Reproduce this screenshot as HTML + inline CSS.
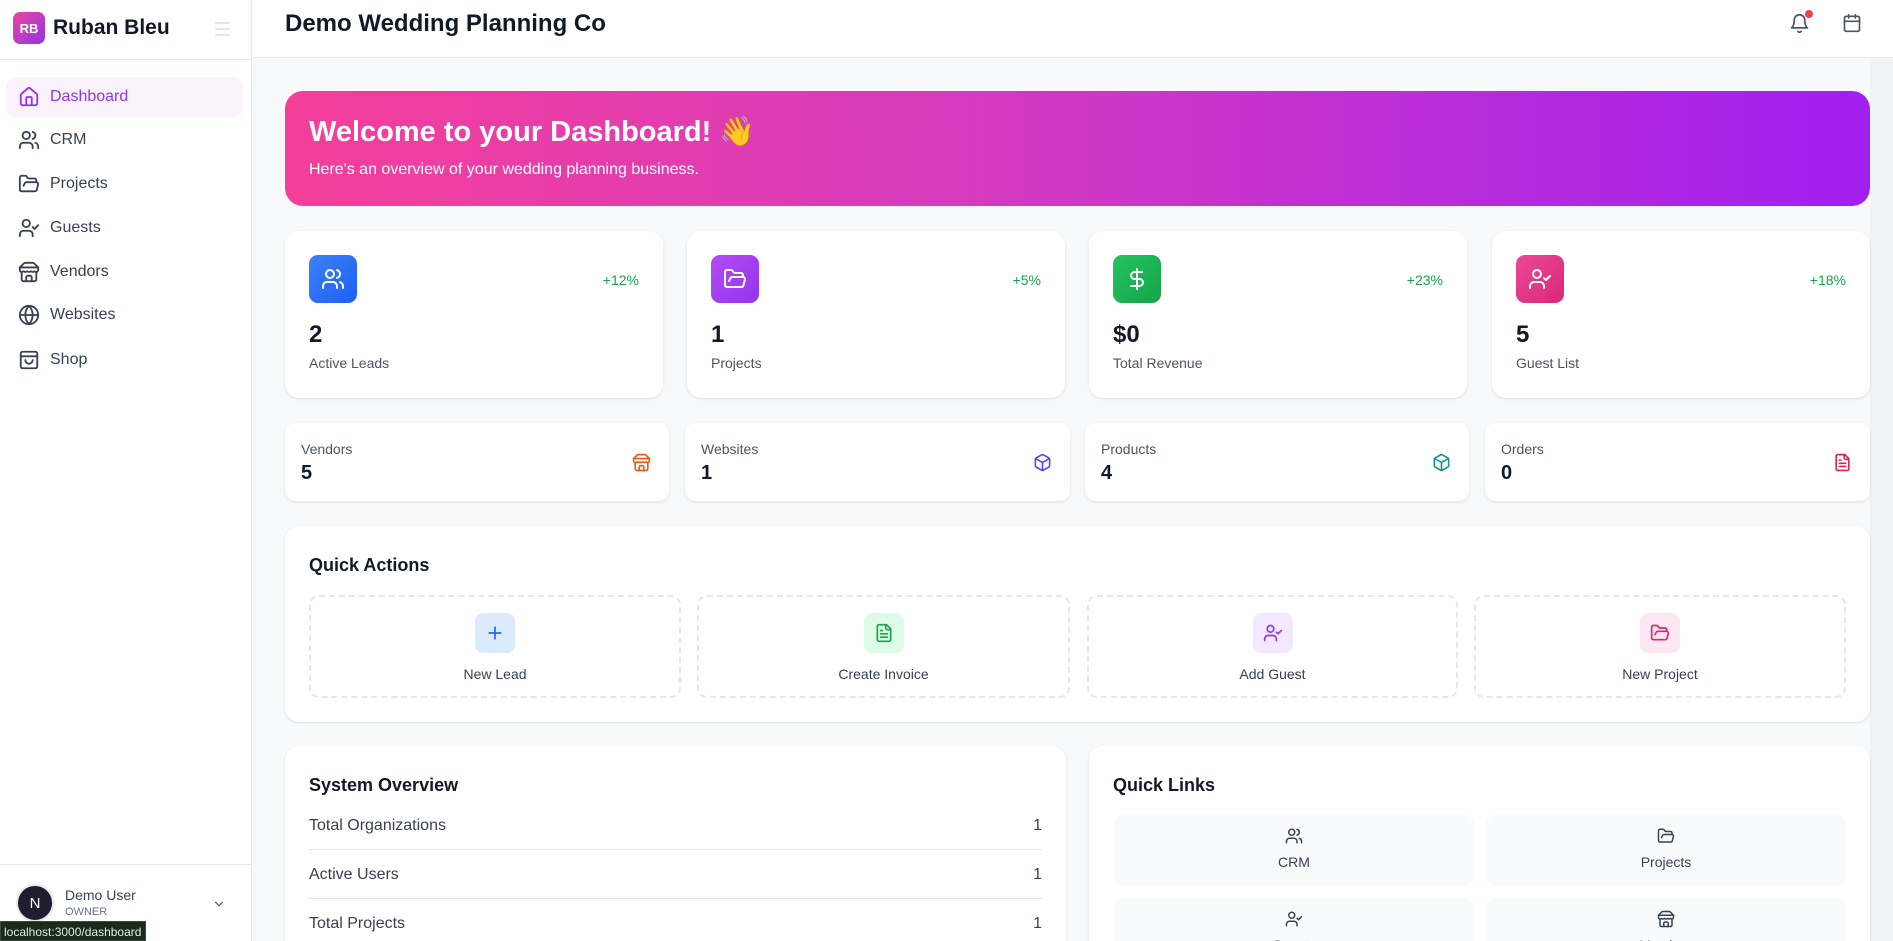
<!DOCTYPE html>
<html style="width:1893px;height:941px;overflow:hidden"><head><meta charset="utf-8">
<style>
*{box-sizing:border-box;margin:0;padding:0}
body{width:1893px;height:941px;overflow:hidden;background:#f8f9fb;font-family:"Liberation Sans",Arial,sans-serif;color:#111827;position:relative}
.abs{position:absolute}
svg.i{fill:none;stroke:currentColor;stroke-width:2;stroke-linecap:round;stroke-linejoin:round}
.side{left:0;top:0;width:252px;height:941px;background:#fff;border-right:1px solid #e5e7eb}
.nav{position:absolute;left:6px;width:237px;height:44px;display:flex;align-items:center;padding-left:12px;font-size:16px;color:#374151}
.nav svg{width:22px;height:22px;margin-right:10px;color:#374151}
.card{position:absolute;background:#fff;border-radius:14px;box-shadow:0 1px 3px rgba(0,0,0,.08),0 1px 2px rgba(0,0,0,.04)}
.ib{position:absolute;left:24px;top:24px;width:48px;height:48px;border-radius:9px;display:flex;align-items:center;justify-content:center;color:#fff}
.ib svg{width:24px;height:24px}
.pct{position:absolute;right:24px;top:41px;font-size:14px;color:#16a34a}
.num{position:absolute;left:24px;top:90px;font-size:24px;font-weight:bold}
.lbl{position:absolute;left:24px;top:124px;font-size:14px;color:#4b5563}
.sm .l{position:absolute;left:16px;top:18px;font-size:14px;color:#4b5563}
.sm .v{position:absolute;left:16px;top:39px;font-size:20px;font-weight:bold}
.sm svg{position:absolute;right:18px;top:30px;width:19px;height:19px}
.qa{position:absolute;top:595px;height:103px;border:2px dashed #e5e7eb;border-radius:10px;text-align:center}
.qa .b{width:40px;height:40px;border-radius:8px;margin:16px auto 0;display:flex;align-items:center;justify-content:center}
.qa .b svg{width:20px;height:20px}
.qa .t{margin-top:13px;font-size:14px;color:#374151}
.ttl{position:absolute;left:24px;font-size:18px;font-weight:bold}
.row{position:absolute;left:24px;right:24px;height:48px;display:flex;justify-content:space-between;align-items:center;font-size:16px;color:#374151;border-bottom:1px solid #e5e7eb}
.ql{position:absolute;width:360px;height:71px;background:#f9fafb;border-radius:10px;text-align:center;color:#374151;font-size:14px;overflow:hidden}
.ql svg{width:18px;height:18px;display:block;margin:12px auto 9px}
</style></head><body>
<svg width="0" height="0" style="position:absolute">
<defs>
<symbol id="home" viewBox="0 0 24 24"><path d="M15 21v-8a1 1 0 0 0-1-1h-4a1 1 0 0 0-1 1v8"/><path d="M3 10a2 2 0 0 1 .709-1.528l7-5.999a2 2 0 0 1 2.582 0l7 5.999A2 2 0 0 1 21 10v9a2 2 0 0 1-2 2H5a2 2 0 0 1-2-2z"/></symbol>
<symbol id="users" viewBox="0 0 24 24"><path d="M16 21v-2a4 4 0 0 0-4-4H6a4 4 0 0 0-4 4v2"/><circle cx="9" cy="7" r="4"/><path d="M22 21v-2a4 4 0 0 0-3-3.87"/><path d="M16 3.130a4 4 0 0 1 0 7.75"/></symbol>
<symbol id="folder" viewBox="0 0 24 24"><path d="m6 14 1.5-2.9A2 2 0 0 1 9.24 10H20a2 2 0 0 1 1.94 2.5l-1.54 6a2 2 0 0 1-1.95 1.5H4a2 2 0 0 1-2-2V5a2 2 0 0 1 2-2h3.9a2 2 0 0 1 1.69.9l.81 1.2a2 2 0 0 0 1.67.9H18a2 2 0 0 1 2 2v2"/></symbol>
<symbol id="ucheck" viewBox="0 0 24 24"><path d="M16 21v-2a4 4 0 0 0-4-4H6a4 4 0 0 0-4 4v2"/><circle cx="9" cy="7" r="4"/><polyline points="16 11 18 13 22 9"/></symbol>
<symbol id="store" viewBox="0 0 24 24"><path d="m2 7 4.41-4.41A2 2 0 0 1 7.830 2h8.34a2 2 0 0 1 1.42.59L22 7"/><path d="M4 12v8a2 2 0 0 0 2 2h12a2 2 0 0 0 2-2v-8"/><path d="M15 22v-4a2 2 0 0 0-2-2h-2a2 2 0 0 0-2 2v4"/><path d="M2 7h20"/><path d="M22 7v3a2 2 0 0 1-2 2a2.7 2.7 0 0 1-1.59-.63.7.7 0 0 0-.82 0A2.7 2.7 0 0 1 16 12a2.7 2.7 0 0 1-1.59-.63.7.7 0 0 0-.82 0A2.7 2.7 0 0 1 12 12a2.7 2.7 0 0 1-1.59-.63.7.7 0 0 0-.82 0A2.7 2.7 0 0 1 8 12a2.7 2.7 0 0 1-1.59-.63.7.7 0 0 0-.82 0A2.7 2.7 0 0 1 4 12a2 2 0 0 1-2-2V7"/></symbol>
<symbol id="globe" viewBox="0 0 24 24"><circle cx="12" cy="12" r="10"/><path d="M12 2a14.5 14.5 0 0 0 0 20 14.5 14.5 0 0 0 0-20"/><path d="M2 12h20"/></symbol>
<symbol id="bag" viewBox="0 0 24 24"><rect x="3" y="3" width="18" height="18" rx="2"/><path d="M3 8h18"/><path d="M16 12a4 4 0 0 1-8 0"/></symbol>
<symbol id="dollar" viewBox="0 0 24 24"><line x1="12" x2="12" y1="2" y2="22"/><path d="M17 5H9.5a3.5 3.5 0 0 0 0 7h5a3.5 3.5 0 0 1 0 7H6"/></symbol>
<symbol id="pkg" viewBox="0 0 24 24"><path d="M11 21.73a2 2 0 0 0 2 0l7-4A2 2 0 0 0 21 16V8a2 2 0 0 0-1-1.73l-7-4a2 2 0 0 0-2 0l-7 4A2 2 0 0 0 3 8v8a2 2 0 0 0 1 1.73z"/><path d="M12 22V12"/><path d="m3.3 7 8.7 5 8.7-5"/></symbol>
<symbol id="file" viewBox="0 0 24 24"><path d="M15 2H6a2 2 0 0 0-2 2v16a2 2 0 0 0 2 2h12a2 2 0 0 0 2-2V7Z"/><path d="M14 2v4a2 2 0 0 0 2 2h4"/><path d="M10 9H8"/><path d="M16 13H8"/><path d="M16 17H8"/></symbol>
<symbol id="bell" viewBox="0 0 24 24"><path d="M6 8a6 6 0 0 1 12 0c0 7 3 9 3 9H3s3-2 3-9"/><path d="M10.3 21a1.94 1.94 0 0 0 3.4 0"/></symbol>
<symbol id="cal" viewBox="0 0 24 24"><rect width="18" height="18" x="3" y="4" rx="2"/><path d="M16 2v4"/><path d="M8 2v4"/><path d="M3 10h18"/></symbol>
<symbol id="plus" viewBox="0 0 24 24"><path d="M5 12h14"/><path d="M12 5v14"/></symbol>
</defs></svg>

<!-- Sidebar -->
<div class="abs side">
  <div class="abs" style="left:0;top:0;width:252px;height:60px;border-bottom:1px solid #e5e7eb"></div>
  <div class="abs" style="left:13px;top:12px;width:32px;height:32px;border-radius:7px;background:linear-gradient(135deg,#ec4899,#9333ea);color:#fff;font-weight:bold;font-size:13px;display:flex;align-items:center;justify-content:center">RB</div>
  <div class="abs" style="left:53px;top:16px;font-size:21px;font-weight:bold;color:#111827">Ruban Bleu</div>
  <div class="abs" style="left:215px;top:22px;width:15px">
    <div style="height:2px;background:#e5e7eb;margin-bottom:4px"></div><div style="height:2px;background:#e5e7eb;margin-bottom:4px"></div><div style="height:2px;background:#e5e7eb"></div>
  </div>
  <div class="nav" style="top:77px;height:40px;background:#faf3fc;border-radius:10px;color:#9333ea"><svg class="i" style="color:#9333ea"><use href="#home"/></svg>Dashboard</div>
  <div class="nav" style="top:118px"><svg class="i"><use href="#users"/></svg>CRM</div>
  <div class="nav" style="top:162px"><svg class="i"><use href="#folder"/></svg>Projects</div>
  <div class="nav" style="top:206px"><svg class="i"><use href="#ucheck"/></svg>Guests</div>
  <div class="nav" style="top:250px"><svg class="i"><use href="#store"/></svg>Vendors</div>
  <div class="nav" style="top:293px"><svg class="i"><use href="#globe"/></svg>Websites</div>
  <div class="nav" style="top:338px"><svg class="i"><use href="#bag"/></svg>Shop</div>
  <div class="abs" style="left:0;top:864px;width:252px;border-top:1px solid #e5e7eb"></div>
  <div class="abs" style="left:16px;top:884px;width:38px;height:38px;border-radius:50%;background:#1f1d2e;border:2px solid #e5e7eb;color:#fff;font-size:15px;display:flex;align-items:center;justify-content:center">N</div>
  <div class="abs" style="left:65px;top:887px;font-size:14px;color:#374151">Demo User</div>
  <div class="abs" style="left:65px;top:906px;font-size:11px;color:#6b7280">OWNER</div>
  <svg class="i abs" style="left:212px;top:897px;width:14px;height:14px;color:#4b5563" viewBox="0 0 24 24"><path d="m6 9 6 6 6-6"/></svg>
</div>
<div class="abs" style="left:0;top:921px;width:146px;height:20px;background:#1c2a1c;border:1px solid #3a4a3a;color:#d9f2d9;font-size:12px;padding:3px 0 0 3px">localhost:3000/dashboard</div>

<!-- Header -->
<div class="abs" style="left:253px;top:0;width:1640px;height:58px;background:#fff;border-bottom:1px solid #e5e7eb"></div>
<div class="abs" style="left:285px;top:10px;font-size:24px;font-weight:bold">Demo Wedding Planning Co</div>
<svg class="i abs" style="left:1789px;top:13px;width:21px;height:21px;color:#4b5563"><use href="#bell"/></svg>
<div class="abs" style="left:1805px;top:10px;width:8px;height:8px;border-radius:50%;background:#ef4444"></div>
<svg class="i abs" style="left:1842px;top:13px;width:20px;height:20px;color:#4b5563"><use href="#cal"/></svg>
<div class="abs" style="left:1870px;top:59px;width:23px;height:882px;background:#f1f2f4"></div>

<!-- Banner -->
<div class="abs" style="left:285px;top:91px;width:1585px;height:115px;border-radius:18px;background:linear-gradient(90deg,#f43f9a 0%,#d43ac0 45%,#a11ff0 100%)"></div>
<div class="abs" style="left:309px;top:115px;font-size:29px;font-weight:bold;color:#fff">Welcome to your Dashboard! <span style="font-family:'Noto Color Emoji','DejaVu Sans',sans-serif;color:#f5b83d">👋</span></div>
<div class="abs" style="left:309px;top:161px;font-size:16px;color:#fff">Here's an overview of your wedding planning business.</div>

<!-- Stat cards -->
<div class="card" style="left:285px;top:231px;width:378px;height:167px">
  <div class="ib" style="background:linear-gradient(135deg,#3b82f6,#1d5ff5)"><svg class="i"><use href="#users"/></svg></div>
  <div class="pct">+12%</div><div class="num">2</div><div class="lbl">Active Leads</div></div>
<div class="card" style="left:687px;top:231px;width:378px;height:167px">
  <div class="ib" style="background:linear-gradient(135deg,#b44cf7,#9333ea)"><svg class="i"><use href="#folder"/></svg></div>
  <div class="pct">+5%</div><div class="num">1</div><div class="lbl">Projects</div></div>
<div class="card" style="left:1089px;top:231px;width:378px;height:167px">
  <div class="ib" style="background:linear-gradient(135deg,#22c55e,#16a34a)"><svg class="i"><use href="#dollar"/></svg></div>
  <div class="pct">+23%</div><div class="num">$0</div><div class="lbl">Total Revenue</div></div>
<div class="card" style="left:1492px;top:231px;width:378px;height:167px">
  <div class="ib" style="background:linear-gradient(135deg,#ec4899,#db2777)"><svg class="i"><use href="#ucheck"/></svg></div>
  <div class="pct">+18%</div><div class="num">5</div><div class="lbl">Guest List</div></div>

<!-- Small cards -->
<div class="card sm" style="left:285px;top:423px;width:384px;height:78px;border-radius:10px"><div class="l">Vendors</div><div class="v">5</div><svg class="i" style="color:#ea580c"><use href="#store"/></svg></div>
<div class="card sm" style="left:685px;top:423px;width:385px;height:78px;border-radius:10px"><div class="l">Websites</div><div class="v">1</div><svg class="i" style="color:#4f46e5"><use href="#pkg"/></svg></div>
<div class="card sm" style="left:1085px;top:423px;width:384px;height:78px;border-radius:10px"><div class="l">Products</div><div class="v">4</div><svg class="i" style="color:#0d9488"><use href="#pkg"/></svg></div>
<div class="card sm" style="left:1485px;top:423px;width:385px;height:78px;border-radius:10px"><div class="l">Orders</div><div class="v">0</div><svg class="i" style="color:#e11d48"><use href="#file"/></svg></div>

<!-- Quick actions -->
<div class="card" style="left:285px;top:526px;width:1585px;height:196px"><div class="ttl" style="top:29px">Quick Actions</div></div>
<div class="qa" style="left:309px;width:372px"><div class="b" style="background:#dbeafe;color:#2563eb"><svg class="i"><use href="#plus"/></svg></div><div class="t">New Lead</div></div>
<div class="qa" style="left:697px;width:373px"><div class="b" style="background:#dcfce7;color:#16a34a"><svg class="i"><use href="#file"/></svg></div><div class="t">Create Invoice</div></div>
<div class="qa" style="left:1087px;width:371px"><div class="b" style="background:#f3e8ff;color:#9333ea"><svg class="i"><use href="#ucheck"/></svg></div><div class="t">Add Guest</div></div>
<div class="qa" style="left:1474px;width:372px"><div class="b" style="background:#fce7f3;color:#db2777"><svg class="i"><use href="#folder"/></svg></div><div class="t">New Project</div></div>

<!-- System overview -->
<div class="card" style="left:285px;top:746px;width:781px;height:195px;border-radius:14px 14px 0 0">
  <div class="ttl" style="top:29px">System Overview</div>
  <div class="row" style="top:56px"><span>Total Organizations</span><span>1</span></div>
  <div class="row" style="top:105px"><span>Active Users</span><span>1</span></div>
  <div class="row" style="top:154px;border-bottom:none"><span>Total Projects</span><span>1</span></div>
</div>

<!-- Quick links -->
<div class="card" style="left:1089px;top:746px;width:781px;height:195px;border-radius:14px 14px 0 0;overflow:hidden">
  <div class="ttl" style="top:29px">Quick Links</div>
  <div class="ql" style="left:25px;top:69px"><svg class="i"><use href="#users"/></svg>CRM</div>
  <div class="ql" style="left:397px;top:69px"><svg class="i"><use href="#folder"/></svg>Projects</div>
  <div class="ql" style="left:25px;top:152px"><svg class="i"><use href="#ucheck"/></svg>Guests</div>
  <div class="ql" style="left:397px;top:152px"><svg class="i"><use href="#store"/></svg>Vendors</div>
</div>
</body></html>
